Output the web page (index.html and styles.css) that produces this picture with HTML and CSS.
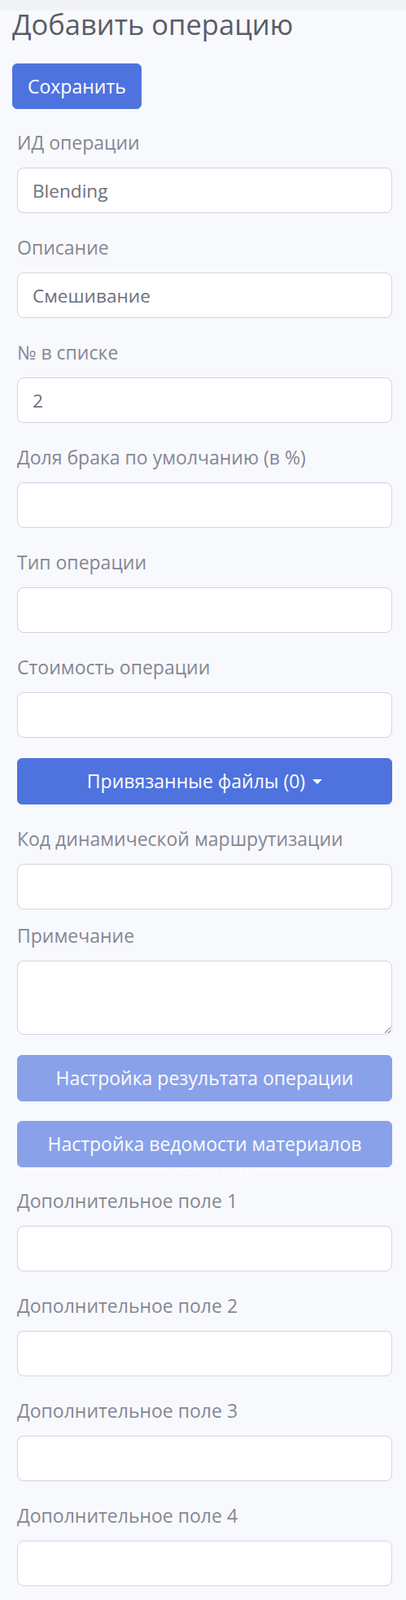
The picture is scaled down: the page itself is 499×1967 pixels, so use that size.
FILE: index.html
```html
<!DOCTYPE html>
<html lang="ru">
  <head>
    <meta charset="UTF-8" />
    <meta name="viewport" content="width=device-width, initial-scale=1.0" />
    <title>Добавить операцию</title>
    <link rel="stylesheet" href="styles.css">
  </head>

  <body>
    <div class="page">
      <h1 class="page-title">Добавить операцию</h1>
      <button type="button" class="btn btn-primary btn-save">Сохранить</button>

      <form class="op-form">
        <div class="form-group">
          <label for="op-id">ИД операции</label>
          <input type="text" id="op-id" class="form-control" value="Blending" />
        </div>
        <div class="form-group">
          <label for="op-desc">Описание</label>
          <input type="text" id="op-desc" class="form-control" value="Смешивание" />
        </div>
        <div class="form-group">
          <label for="op-num">№ в списке</label>
          <input type="text" id="op-num" class="form-control" value="2" />
        </div>
        <div class="form-group">
          <label for="op-scrap">Доля брака по умолчанию (в %)</label>
          <input type="text" id="op-scrap" class="form-control" />
        </div>
        <div class="form-group">
          <label for="op-type">Тип операции</label>
          <input type="text" id="op-type" class="form-control" />
        </div>
        <div class="form-group">
          <label for="op-cost">Стоимость операции</label>
          <input type="text" id="op-cost" class="form-control" />
        </div>
        <div class="form-group">
          <button type="button" class="btn btn-primary btn-block dropdown-toggle">Привязанные файлы (0)</button>
        </div>
        <div class="form-group form-group-tight">
          <label for="op-route">Код динамической маршрутизации</label>
          <input type="text" id="op-route" class="form-control" />
        </div>
        <div class="form-group">
          <label for="op-note">Примечание</label>
          <textarea id="op-note" class="form-control" rows="2"></textarea>
        </div>

        <button type="button" class="btn btn-primary btn-block" disabled>Настройка результата операции</button>
        <button type="button" class="btn btn-primary btn-block" disabled>Настройка ведомости материалов операции</button>

        <div class="form-group">
          <label for="extra1">Дополнительное поле 1</label>
          <input type="text" id="extra1" class="form-control" />
        </div>
        <div class="form-group">
          <label for="extra2">Дополнительное поле 2</label>
          <input type="text" id="extra2" class="form-control" />
        </div>
        <div class="form-group">
          <label for="extra3">Дополнительное поле 3</label>
          <input type="text" id="extra3" class="form-control" />
        </div>
        <div class="form-group">
          <label for="extra4">Дополнительное поле 4</label>
          <input type="text" id="extra4" class="form-control" />
        </div>
      </form>
    </div>
  </body>
</html>
```

FILE: styles.css
```css
body {
  margin: 0;
  font-family: "Open Sans", "Noto Sans", sans-serif;
  background: linear-gradient(#f2f3f6 0, #f2f3f6 13px, #f8f9fc 13px);
  background-color: #f8f9fc;
}

.page {
  padding: 0 17px 0 15px;
}

.page-title {
  margin: 0;
  padding-top: 9px;
  font-size: 34.5px;
  font-weight: 400;
  line-height: 1.2;
  color: #5a5c69;
}

.btn {
  display: inline-block;
  box-sizing: border-box;
  padding: 10px 19px;
  font-family: inherit;
  font-size: 23px;
  line-height: 35px;
  text-align: center;
  color: #fff;
  background-color: #4e73df;
  border: 1px solid #4e73df;
  border-radius: 6px;
  cursor: pointer;
}

.btn:disabled {
  opacity: 0.65;
  cursor: default;
}

.btn-save {
  margin-top: 28px;
  height: 56px;
  padding: 10px 18px;
}

.btn-block {
  display: block;
  width: 100%;
  height: 57px;
  margin-bottom: 24px;
}

.dropdown-toggle::after {
  content: "";
  display: inline-block;
  margin-left: 9px;
  vertical-align: 5px;
  border-top: 6.5px solid;
  border-left: 6.5px solid transparent;
  border-right: 6.5px solid transparent;
}

.op-form {
  margin: 24px 0 0 6px;
}

.form-group {
  margin-bottom: 25px;
}

.form-group-tight {
  margin-bottom: 15px;
}

.form-group label {
  display: block;
  margin-bottom: 13px;
  font-size: 23px;
  line-height: 35px;
  color: #858796;
}

.form-control {
  display: block;
  box-sizing: border-box;
  width: 100%;
  height: 56px;
  padding: 10px 18px;
  font-family: inherit;
  font-size: 22.6px;
  line-height: 34px;
  color: #6e707e;
  background-color: #fff;
  border: 1px solid #d1d3e2;
  border-radius: 8px;
}

textarea.form-control {
  height: 91px;
  resize: vertical;
}
```
